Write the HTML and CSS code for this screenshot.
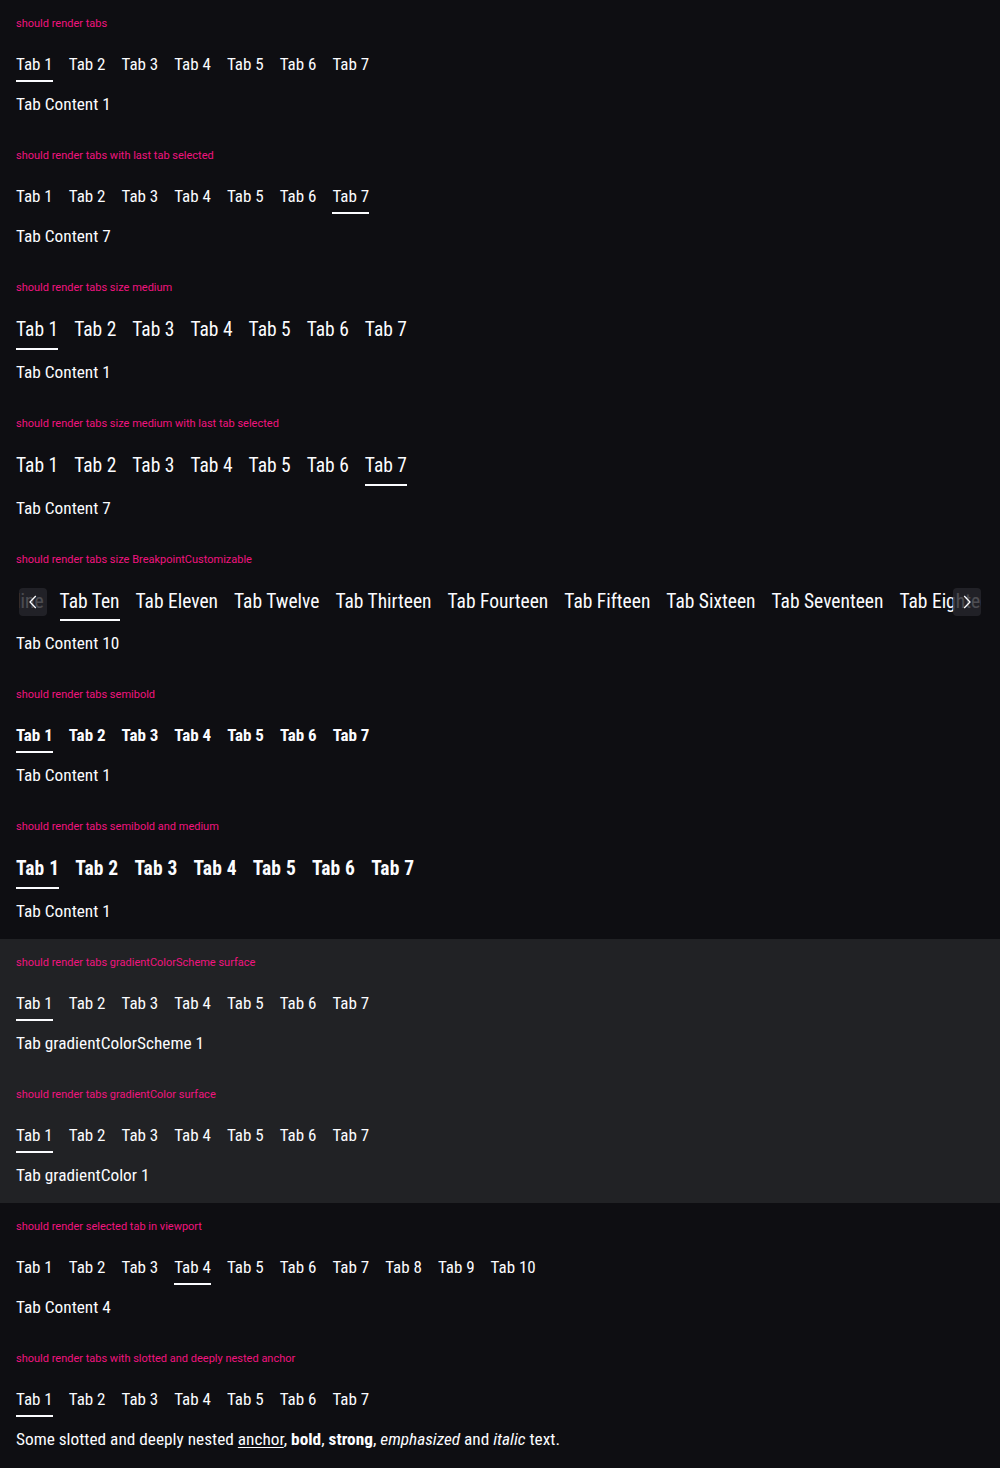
FILE: index.html
```html
<!DOCTYPE html>
<html lang="en">
<head>
<meta charset="utf-8">
<title>Tabs</title>
<link rel="stylesheet" href="styles.css">
</head>
<body>
<div class="section">
  <p class="label">should render tabs</p>
  <div class="tabs">
    <span class="tab active">Tab 1</span><span class="tab">Tab 2</span><span class="tab">Tab 3</span><span class="tab">Tab 4</span><span class="tab">Tab 5</span><span class="tab">Tab 6</span><span class="tab">Tab 7</span>
  </div>
  <p class="content">Tab Content 1</p>
</div>

<div class="section">
  <p class="label">should render tabs with last tab selected</p>
  <div class="tabs">
    <span class="tab">Tab 1</span><span class="tab">Tab 2</span><span class="tab">Tab 3</span><span class="tab">Tab 4</span><span class="tab">Tab 5</span><span class="tab">Tab 6</span><span class="tab active">Tab 7</span>
  </div>
  <p class="content">Tab Content 7</p>
</div>

<div class="section">
  <p class="label">should render tabs size medium</p>
  <div class="tabs medium">
    <span class="tab active">Tab 1</span><span class="tab">Tab 2</span><span class="tab">Tab 3</span><span class="tab">Tab 4</span><span class="tab">Tab 5</span><span class="tab">Tab 6</span><span class="tab">Tab 7</span>
  </div>
  <p class="content">Tab Content 1</p>
</div>

<div class="section">
  <p class="label">should render tabs size medium with last tab selected</p>
  <div class="tabs medium">
    <span class="tab">Tab 1</span><span class="tab">Tab 2</span><span class="tab">Tab 3</span><span class="tab">Tab 4</span><span class="tab">Tab 5</span><span class="tab">Tab 6</span><span class="tab active">Tab 7</span>
  </div>
  <p class="content">Tab Content 7</p>
</div>

<div class="section">
  <p class="label">should render tabs size BreakpointCustomizable</p>
  <div class="scroller">
    <div class="tabs medium scrolling" id="bp-tabs">
      <span class="tab">Tab One</span><span class="tab">Tab Two</span><span class="tab">Tab Three</span><span class="tab">Tab Four</span><span class="tab">Tab Five</span><span class="tab">Tab Six</span><span class="tab">Tab Seven</span><span class="tab">Tab Eight</span><span class="tab">Tab Nine</span><span class="tab active" id="bp-active">Tab Ten</span><span class="tab">Tab Eleven</span><span class="tab">Tab Twelve</span><span class="tab">Tab Thirteen</span><span class="tab">Tab Fourteen</span><span class="tab">Tab Fifteen</span><span class="tab">Tab Sixteen</span><span class="tab">Tab Seventeen</span><span class="tab">Tab Eighteen</span><span class="tab">Tab Nineteen</span><span class="tab">Tab Twenty</span>
    </div>
    <span class="scroll-btn prev" aria-label="prev">
      <svg width="24" height="24" viewBox="0 0 24 24"><path d="M14.8 6 9 12l5.8 6" fill="none" stroke="#fbfcff" stroke-width="1.3"/></svg>
    </span>
    <span class="scroll-btn next" aria-label="next">
      <svg width="24" height="24" viewBox="0 0 24 24"><path d="M9.2 6 15 12l-5.8 6" fill="none" stroke="#fbfcff" stroke-width="1.3"/></svg>
    </span>
  </div>
  <p class="content">Tab Content 10</p>
</div>

<div class="section">
  <p class="label">should render tabs semibold</p>
  <div class="tabs semibold">
    <span class="tab active">Tab 1</span><span class="tab">Tab 2</span><span class="tab">Tab 3</span><span class="tab">Tab 4</span><span class="tab">Tab 5</span><span class="tab">Tab 6</span><span class="tab">Tab 7</span>
  </div>
  <p class="content">Tab Content 1</p>
</div>

<div class="section">
  <p class="label">should render tabs semibold and medium</p>
  <div class="tabs medium semibold">
    <span class="tab active">Tab 1</span><span class="tab">Tab 2</span><span class="tab">Tab 3</span><span class="tab">Tab 4</span><span class="tab">Tab 5</span><span class="tab">Tab 6</span><span class="tab">Tab 7</span>
  </div>
  <p class="content">Tab Content 1</p>
</div>

<div class="surface">
  <div class="section">
    <p class="label">should render tabs gradientColorScheme surface</p>
    <div class="tabs">
      <span class="tab active">Tab 1</span><span class="tab">Tab 2</span><span class="tab">Tab 3</span><span class="tab">Tab 4</span><span class="tab">Tab 5</span><span class="tab">Tab 6</span><span class="tab">Tab 7</span>
    </div>
    <p class="content">Tab gradientColorScheme 1</p>
  </div>
  <div class="section">
    <p class="label">should render tabs gradientColor surface</p>
    <div class="tabs">
      <span class="tab active">Tab 1</span><span class="tab">Tab 2</span><span class="tab">Tab 3</span><span class="tab">Tab 4</span><span class="tab">Tab 5</span><span class="tab">Tab 6</span><span class="tab">Tab 7</span>
    </div>
    <p class="content">Tab gradientColor 1</p>
  </div>
</div>

<div class="section">
  <p class="label">should render selected tab in viewport</p>
  <div class="tabs">
    <span class="tab">Tab 1</span><span class="tab">Tab 2</span><span class="tab">Tab 3</span><span class="tab active">Tab 4</span><span class="tab">Tab 5</span><span class="tab">Tab 6</span><span class="tab">Tab 7</span><span class="tab">Tab 8</span><span class="tab">Tab 9</span><span class="tab">Tab 10</span>
  </div>
  <p class="content">Tab Content 4</p>
</div>

<div class="section">
  <p class="label">should render tabs with slotted and deeply nested anchor</p>
  <div class="tabs">
    <span class="tab active">Tab 1</span><span class="tab">Tab 2</span><span class="tab">Tab 3</span><span class="tab">Tab 4</span><span class="tab">Tab 5</span><span class="tab">Tab 6</span><span class="tab">Tab 7</span>
  </div>
  <p class="content">Some slotted and deeply nested <a href="#">anchor</a>, <b>bold</b>, <strong>strong</strong>, <em>emphasized</em> and <i>italic</i> text.</p>
</div>

<script src="script.js"></script>
</body>
</html>
```

FILE: styles.css
```css
html, body {
  margin: 0;
  background: #0e0e12;
}

body {
  color: #fbfcff;
  font-family: "Roboto Condensed", Roboto, sans-serif;
}

.section {
  padding: 16px 16px 15px;
}

.surface {
  background: #212225;
}

.label {
  margin: 0 0 19px;
  font-family: Roboto, "Liberation Sans", sans-serif;
  font-size: 11px;
  line-height: 16px;
  color: #f0147f;
}

.tabs {
  display: flex;
  gap: 16px;
}

.tab {
  flex: none;
  font-size: 17px;
  line-height: 26px;
  padding-bottom: 3px;
  border-bottom: 2px solid transparent;
  white-space: nowrap;
}

.tab.active {
  border-bottom-color: #fbfcff;
}

.tabs.medium .tab {
  font-size: 19.5px;
  line-height: 28px;
  padding-top: 1px;
  padding-bottom: 4px;
}

.tabs.semibold .tab {
  font-weight: 700;
}

.tabs.medium.semibold .tab {
  letter-spacing: 0.2px;
}

.content {
  margin: 9px 0 0;
  font-size: 17.3px;
  line-height: 26px;
}

.content a {
  color: inherit;
  text-decoration: underline;
  text-underline-offset: 2px;
}

/* scrollable tabs bar */
.scroller {
  position: relative;
}

.tabs.scrolling {
  position: relative;
  overflow: hidden;
}

.tabs.scrolling .tab {
  padding-bottom: 3px;
}

.scroller::before,
.scroller::after {
  content: "";
  position: absolute;
  top: 0;
  width: 3px;
  height: 30px;
  background: #0e0e12;
  z-index: 1;
}

.scroller::before {
  left: 0;
}

.scroller::after {
  right: 0;
}

.scroll-btn {
  position: absolute;
  top: 1px;
  width: 28px;
  height: 28px;
  border-radius: 4px;
  background: rgba(38, 38, 44, 0.82);
  display: flex;
  align-items: center;
  justify-content: center;
  z-index: 2;
}

.scroll-btn.prev {
  left: 3px;
}

.scroll-btn.next {
  right: 3px;
}
```

FILE: script.js
```js
(function () {
  var bar = document.getElementById('bp-tabs');
  var active = document.getElementById('bp-active');
  if (bar && active) {
    bar.scrollLeft = active.offsetLeft - 44;
  }
})();
```
